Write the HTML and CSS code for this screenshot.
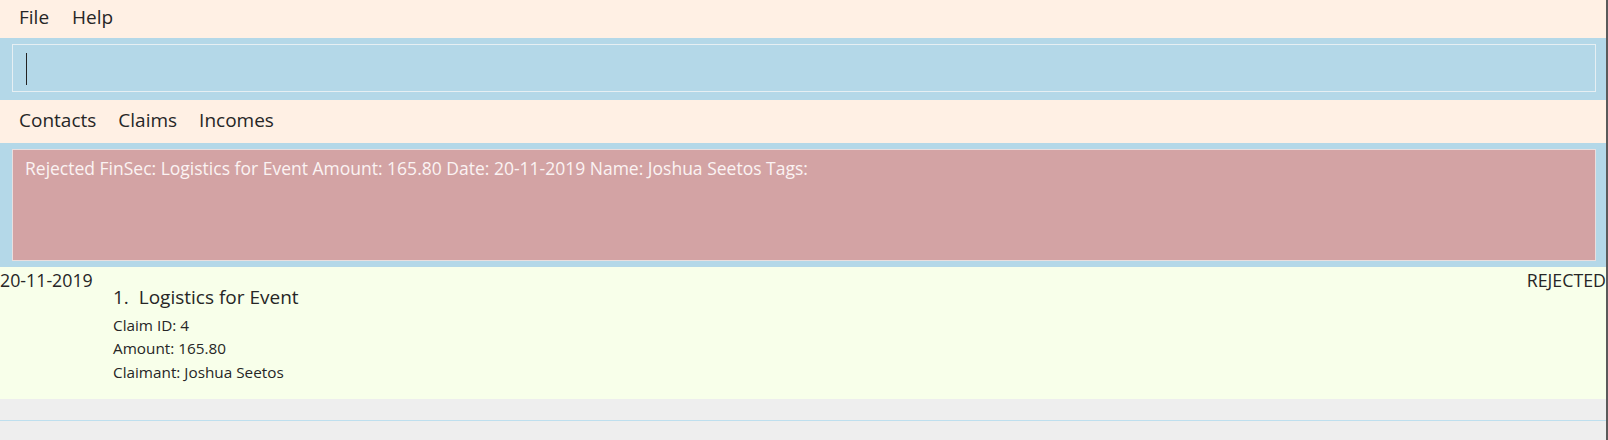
FILE: index.html
```html
<!DOCTYPE html>
<html>
<head>
<meta charset="utf-8">
<link rel="stylesheet" href="styles.css">
</head>
<body>
<div class="app">
  <nav class="menubar">
    <span class="menu-item">File</span>
    <span class="menu-item">Help</span>
  </nav>
  <div class="command-band">
    <div class="command-box"><span class="caret"></span></div>
  </div>
  <nav class="tabs">
    <span class="tab">Contacts</span>
    <span class="tab">Claims</span>
    <span class="tab">Incomes</span>
  </nav>
  <div class="result-band">
    <div class="result-box">Rejected FinSec: Logistics for Event Amount: 165.80 Date: 20-11-2019 Name: Joshua Seetos Tags:</div>
  </div>
  <div class="card">
    <div class="card-date">20-11-2019</div>
    <div class="card-body">
      <div class="card-title">1.&nbsp;&nbsp;Logistics for Event</div>
      <div class="card-detail">Claim ID: 4</div>
      <div class="card-detail">Amount: 165.80</div>
      <div class="card-detail">Claimant: Joshua Seetos</div>
    </div>
    <div class="card-status">REJECTED</div>
  </div>
  <div class="footer">
    <div class="footer-line"></div>
  </div>
</div>
</body>
</html>
```
FILE: styles.css
```css
html, body {
  margin: 0;
  padding: 0;
  height: 100%;
}
body {
  font-family: "Open Sans", "Noto Sans", sans-serif;
  color: #262626;
  background: #eeeeee;
  overflow: hidden;
}
.app {
  width: 1606px;
  height: 440px;
  border-right: 2px solid #5a5a5a;
  display: flex;
  flex-direction: column;
  background: #eeeeee;
}
.menubar {
  background: #fff0e4;
  height: 38px;
  box-sizing: border-box;
  padding: 5px 0 0 19px;
  display: flex;
  gap: 23px;
  font-size: 19px;
  line-height: 24px;
}
.command-band {
  background: #b4d8e8;
  height: 62px;
  box-sizing: border-box;
  padding: 6px 10px 8px 12px;
}
.command-box {
  height: 48px;
  box-sizing: border-box;
  border: 1px solid #e6eff3;
  padding: 8px 0 0 13px;
}
.caret {
  display: block;
  width: 1px;
  height: 32px;
  background: #222;
}
.tabs {
  background: #fff0e4;
  height: 43px;
  box-sizing: border-box;
  padding: 8px 0 0 19px;
  display: flex;
  gap: 22px;
  font-size: 19px;
  line-height: 24px;
}
.result-band {
  background: #b4d8e8;
  height: 124px;
  box-sizing: border-box;
  padding: 6px 10px 6px 12px;
}
.result-box {
  height: 112px;
  box-sizing: border-box;
  background: #d3a3a4;
  border: 1px solid #eadede;
  padding: 8px 12px 0 12px;
  color: #fbf3f3;
  font-size: 17.5px;
  line-height: 20px;
}
.card {
  background: #f8ffea;
  height: 132px;
  box-sizing: border-box;
  padding: 3px 0 0 0;
  display: grid;
  grid-template-columns: 113px 1fr auto;
  align-items: start;
}
.card-date,
.card-status {
  font-size: 17.8px;
  line-height: 20px;
}
.card-body {
  padding-top: 15px;
}
.card-title {
  font-size: 19px;
  line-height: 24px;
  margin-bottom: 4.5px;
}
.card-detail {
  font-size: 15.3px;
  line-height: 23.5px;
}
.footer {
  flex: 1;
  background: #eeeeee;
  padding-top: 21px;
}
.footer-line {
  height: 1px;
  background: #bedfee;
}
```
